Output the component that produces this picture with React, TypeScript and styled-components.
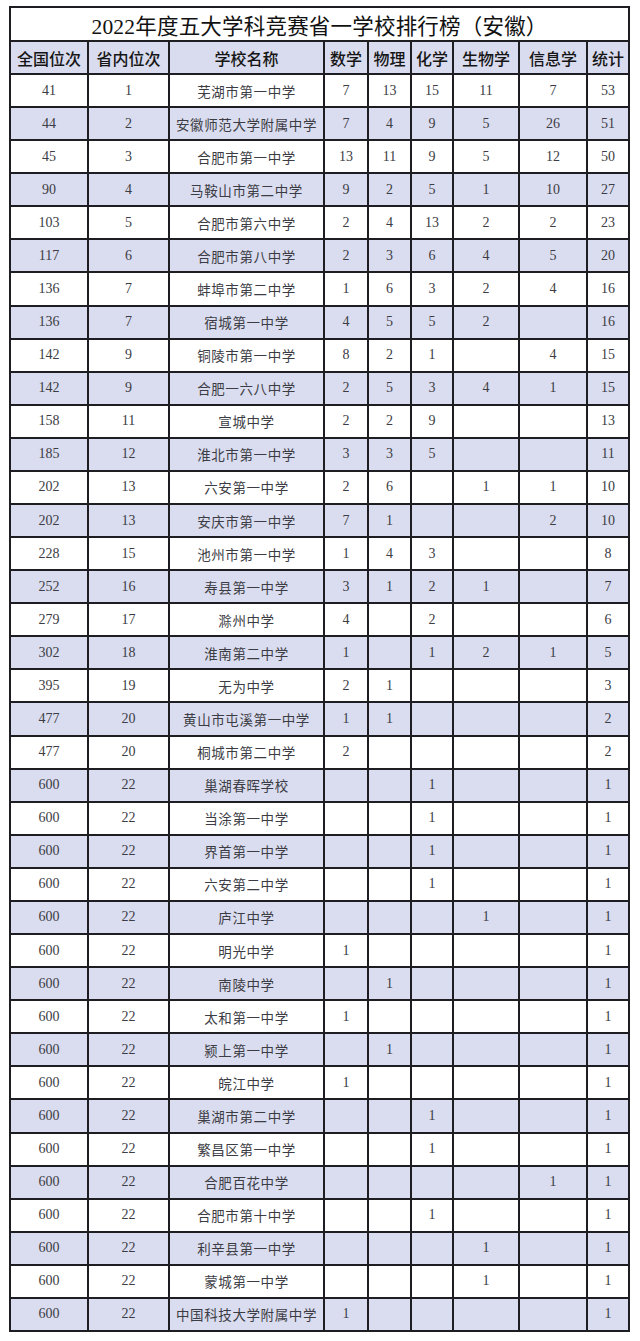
import React from "react";
import styled, { createGlobalStyle } from "styled-components";

const Global = createGlobalStyle`
  html, body { margin: 0; padding: 0; background: #ffffff; }
  body { width: 640px; min-height: 1341px; }
`;

const Page = styled.div`
  padding: 6px 0 9px 9px;
`;

const Grid = styled.div`
  display: grid;
  width: 621px;
  box-sizing: border-box;
  grid-template-columns: 76px 79px 153px 42px 41px 40px 64px 66px 40px;
  grid-template-rows: 32px 31px repeat(38, 31.08px);
  gap: 2px;
  padding: 2px;
  background: #1e1e22;
`;

const Title = styled.div`
  grid-column: 1 / -1;
  background: #ffffff;
  display: flex;
  align-items: center;
  justify-content: center;
  font-family: "Liberation Serif", "Noto Sans CJK SC", serif;
  font-size: 21.5px;
  color: #111;
  letter-spacing: 0.2px;
`;

const Head = styled.div`
  background: #d9dbee;
  display: flex;
  align-items: center;
  justify-content: center;
  font-family: "Noto Sans CJK SC", sans-serif;
  font-weight: 500;
  font-size: 16px;
  color: #151515;
  white-space: nowrap;
`;

const Cell = styled.div<{ $shade: boolean; $name?: boolean }>`
  background: ${(p) => (p.$shade ? "#dadcef" : "#ffffff")};
  display: flex;
  align-items: center;
  justify-content: center;
  font-family: "Liberation Serif", "Noto Sans CJK SC", serif;
  font-size: ${(p) => (p.$name ? "13.5px" : "14px")};
  letter-spacing: ${(p) => (p.$name ? "0.6px" : "0")};
  color: #3c3c44;
  white-space: nowrap;
`;

const headers = ["全国位次", "省内位次", "学校名称", "数学", "物理", "化学", "生物学", "信息学", "统计"];

const raw = `41,1,芜湖市第一中学,7,13,15,11,7,53
44,2,安徽师范大学附属中学,7,4,9,5,26,51
45,3,合肥市第一中学,13,11,9,5,12,50
90,4,马鞍山市第二中学,9,2,5,1,10,27
103,5,合肥市第六中学,2,4,13,2,2,23
117,6,合肥市第八中学,2,3,6,4,5,20
136,7,蚌埠市第二中学,1,6,3,2,4,16
136,7,宿城第一中学,4,5,5,2,,16
142,9,铜陵市第一中学,8,2,1,,4,15
142,9,合肥一六八中学,2,5,3,4,1,15
158,11,宣城中学,2,2,9,,,13
185,12,淮北市第一中学,3,3,5,,,11
202,13,六安第一中学,2,6,,1,1,10
202,13,安庆市第一中学,7,1,,,2,10
228,15,池州市第一中学,1,4,3,,,8
252,16,寿县第一中学,3,1,2,1,,7
279,17,滁州中学,4,,2,,,6
302,18,淮南第二中学,1,,1,2,1,5
395,19,无为中学,2,1,,,,3
477,20,黄山市屯溪第一中学,1,1,,,,2
477,20,桐城市第二中学,2,,,,,2
600,22,巢湖春晖学校,,,1,,,1
600,22,当涂第一中学,,,1,,,1
600,22,界首第一中学,,,1,,,1
600,22,六安第二中学,,,1,,,1
600,22,庐江中学,,,,1,,1
600,22,明光中学,1,,,,,1
600,22,南陵中学,,1,,,,1
600,22,太和第一中学,1,,,,,1
600,22,颍上第一中学,,1,,,,1
600,22,皖江中学,1,,,,,1
600,22,巢湖市第二中学,,,1,,,1
600,22,繁昌区第一中学,,,1,,,1
600,22,合肥百花中学,,,,,1,1
600,22,合肥市第十中学,,,1,,,1
600,22,利辛县第一中学,,,,1,,1
600,22,蒙城第一中学,,,,1,,1
600,22,中国科技大学附属中学,1,,,,,1`;

const rows = raw.split("\n").map((l) => l.split(","));

export default function App() {
  return (
    <Page>
      <Global />
      <Grid>
        <Title>2022年度五大学科竞赛省一学校排行榜（安徽）</Title>
        {headers.map((h) => (
          <Head key={h}>{h}</Head>
        ))}
        {rows.map((r, i) =>
          r.map((v, j) => (
            <Cell key={`${i}-${j}`} $shade={i % 2 === 1} $name={j === 2}>
              {v}
            </Cell>
          ))
        )}
      </Grid>
    </Page>
  );
}
